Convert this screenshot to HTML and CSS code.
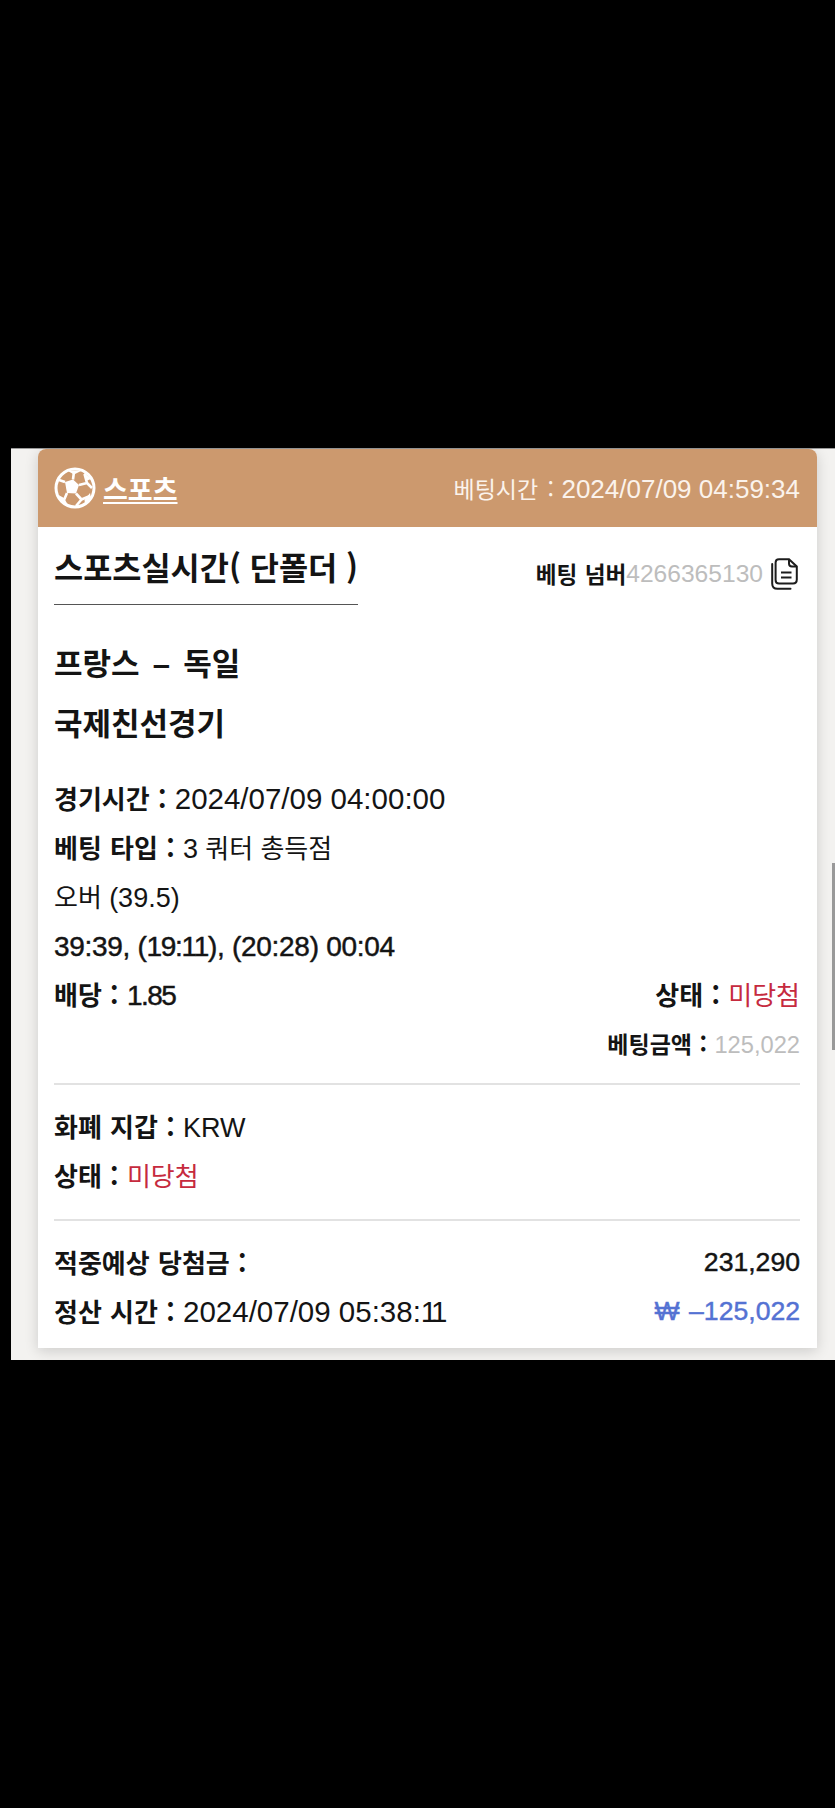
FILE: index.html
```html
<!DOCTYPE html>
<html lang="ko">
<head>
<meta charset="utf-8">
<title>베팅 내역</title>
<link rel="stylesheet" href="styles.css">
</head>
<body>
<main class="panel">
  <article class="card">
    <header class="head">
      <div class="brand">
        <svg class="ball" viewBox="0 0 42 42" aria-hidden="true">
          <circle cx="21" cy="21" r="19" fill="none" stroke="#fff" stroke-width="3"/>
          <path d="M11 15 19 12.5 25 18 22 26.5 13 26Z" fill="#fff"/>
          <path d="M19 12.5 20 4.5M25 18 33 16M22 26.5 27.5 32.5M13 26 10 33M11 15 5 13M33 16 38 21M33 16 30.5 7M27.5 32.5 36 29M27.5 32.5 22 39" fill="none" stroke="#fff" stroke-width="2.6"/>
          <path d="M13 3.5 28 3.5 20 7.5ZM30 5.5 37 12 32 14ZM36 26 37 31 31 37 30.5 33ZM4.5 28 10 31 14 38 8 36Z" fill="#fff"/>
        </svg>
        <span class="brand-name">스포츠</span>
      </div>
      <div class="head-time"><span class="ko-time">베팅시간 :</span> <span class="num-head">2024/07/09 04:59:34</span></div>
    </header>
    <div class="body">
      <div class="top">
        <h1 class="title">스포츠실시간( 단폴더 )</h1>
        <div class="ticket">
          <b class="ticket-label">베팅 넘버</b><span class="ticket-no">4266365130</span>
          <svg class="copy" viewBox="0 0 27 32" aria-hidden="true">
            <path d="M8 1.2H18L25.8 8.5V21.5Q25.8 25.5 22 25.5H8Q4.6 25.5 4.6 22V4.6Q4.6 1.2 8 1.2Z" fill="none" stroke="#1c1c1c" stroke-width="2"/>
            <path d="M18 1.2V5.5Q18 8.5 21 8.5H25.8" fill="none" stroke="#1c1c1c" stroke-width="2"/>
            <path d="M1.2 6V25.5Q1.2 30.8 6.5 30.8H19.5" fill="none" stroke="#1c1c1c" stroke-width="2" stroke-linecap="round"/>
            <path d="M10 14.5H20.5M10 19.5H20.5" fill="none" stroke="#1c1c1c" stroke-width="2"/>
          </svg>
        </div>
      </div>
      <h2 class="match">프랑스 <span class="dash">–</span> 독일</h2>
      <h2 class="match">국제친선경기</h2>
      <div class="rows">
        <div class="row"><span><b>경기시간 :</b> <span class="n">2024/07/09 04:00:00</span></span></div>
        <div class="row"><span><b>베팅 타입 :</b> <span class="n-mid">3</span> 쿼터 총득점</span></div>
        <div class="row"><span>오버 <span class="n-mid">(39.5)</span></span></div>
        <div class="row latin"><span class="n-score strong">39:39, (<span class="tight">19:11</span>), (20:28) 00:04</span></div>
        <div class="row split"><span><b>배당 :</b> <span class="n-odds strong">1.85</span></span><span><b>상태 :</b> <span class="red">미당첨</span></span></div>
        <div class="row end"><span class="small"><b>베팅금액 :</b> <span class="n-small">125,022</span></span></div>
      </div>
      <hr class="rule first">
      <div class="rows wallet">
        <div class="row"><span><b>화폐 지갑 :</b> <span class="n-mid">KRW</span></span></div>
        <div class="row"><span><b>상태 :</b> <span class="red">미당첨</span></span></div>
      </div>
      <hr class="rule">
      <div class="rows wallet bottom">
        <div class="row split"><b>적중예상 당첨금 :</b><span class="n-total strong">231,290</span></div>
        <div class="row split"><span><b>정산 시간 :</b> <span class="n">2024/07/09 05:38:<span class="ones">11</span></span></span><span class="n-total strong blue"><span class="won">₩</span> –125,022</span></div>
      </div>
    </div>
  </article>
  <div class="scrollbar"></div>
</main>
</body>
</html>
```
FILE: styles.css
```css
* { box-sizing: border-box; }
html, body { margin: 0; background: #000; }
body {
  height: 1808px;
  overflow: hidden;
  padding-top: 448px;
  padding-left: 11px;
  font-family: "Liberation Sans", "Noto Sans CJK KR", sans-serif;
  color: #141414;
}
.panel {
  position: relative;
  height: 912px;
  background: #f3f2f0;
  border-top: 1px solid #9a9a9a;
  padding: 0 18px 0 27px;
}
.card {
  height: 899px;
  background: #fff;
  border-radius: 8px 8px 0 0;
  box-shadow: 0 3px 14px rgba(0, 0, 0, .16);
}
.head {
  height: 78px;
  background: #cc996e;
  border-radius: 8px 8px 0 0;
  color: #fff;
  display: flex;
  justify-content: space-between;
  align-items: center;
  padding: 0 17px 0 16px;
}
.brand { display: flex; align-items: center; gap: 7px; }
.ball { width: 42px; height: 42px; }
.brand-name {
  font-family: "Noto Sans CJK KR", sans-serif;
  font-size: 27px;
  font-weight: 700;
  text-decoration: underline;
  text-underline-offset: 2px;
  text-decoration-thickness: 2px;
}
.head-time { color: #fbf3ec; white-space: nowrap; }
.ko-time {
  font-family: "Noto Sans CJK KR", sans-serif;
  font-size: 23px;
  word-spacing: 3px;
  margin-right: 3px;
}
.num-head { font-size: 26px; }
.body { padding: 0 17px 0 16px; }
.top {
  height: 106px;
  display: flex;
  justify-content: space-between;
  align-items: flex-start;
}
.title {
  margin: 14px 0 0;
  height: 64px;
  line-height: 50px;
  font-family: "Noto Sans CJK KR", sans-serif;
  font-size: 31.7px;
  font-weight: 700;
  border-bottom: 1px solid #555;
  white-space: nowrap;
}
.ticket { display: flex; align-items: center; margin-top: 30px; margin-right: 2px; white-space: nowrap; }
.ticket-label {
  font-family: "Noto Sans CJK KR", sans-serif;
  font-size: 22.6px;
  word-spacing: 1px;
}
.ticket-no { font-size: 24.6px; color: #bdbdbd; }
.copy { width: 27px; height: 32px; margin-left: 8px; }
.match {
  margin: 0;
  height: 60px;
  line-height: 57px;
  font-family: "Noto Sans CJK KR", sans-serif;
  font-size: 31px;
  font-weight: 700;
  word-spacing: 4.5px;
}
.dash { font-family: "Liberation Sans", sans-serif; }
.rows { margin-top: 22px; }
.row {
  height: 49px;
  padding-bottom: 4px;
  display: flex;
  align-items: center;
  font-family: "Noto Sans CJK KR", sans-serif;
  font-size: 26px;
  white-space: nowrap;
}
.row.latin { padding-bottom: 0; }
.row b { margin-right: 1px; word-spacing: 1px; }
.split { justify-content: space-between; }
.end { justify-content: flex-end; }
.n { font-family: "Liberation Sans", sans-serif; font-size: 29.5px; }
.n-mid { font-family: "Liberation Sans", sans-serif; font-size: 27px; }
.n-score { font-family: "Liberation Sans", sans-serif; font-size: 28px; letter-spacing: -.3px; }
.tight { letter-spacing: -1.3px; }
.ones { letter-spacing: -4px; }
.n-odds { font-family: "Liberation Sans", sans-serif; font-size: 28px; letter-spacing: -1.5px; }
.n-small { font-family: "Liberation Sans", sans-serif; font-size: 23.7px; color: #bdbdbd; }
.n-total { font-family: "Liberation Sans", sans-serif; font-size: 26.6px; margin-top: 2px; }
.won { margin-right: 2px; font-weight: 400; }
.small { font-size: 23px; }
.strong { -webkit-text-stroke: .45px currentColor; }
.red { color: #c62a3e; }
.blue { color: #5472d3; }
.rule { height: 2px; margin: 14px 0 0; border: 0; background: #e2e2e2; }
.wallet { margin-top: 18px; }
.wallet + .rule { margin-top: 18px; }
.bottom .row { padding-bottom: 5px; }
.scrollbar {
  position: absolute;
  right: 0;
  top: 414px;
  width: 3px;
  height: 187px;
  background: #999;
}
```
